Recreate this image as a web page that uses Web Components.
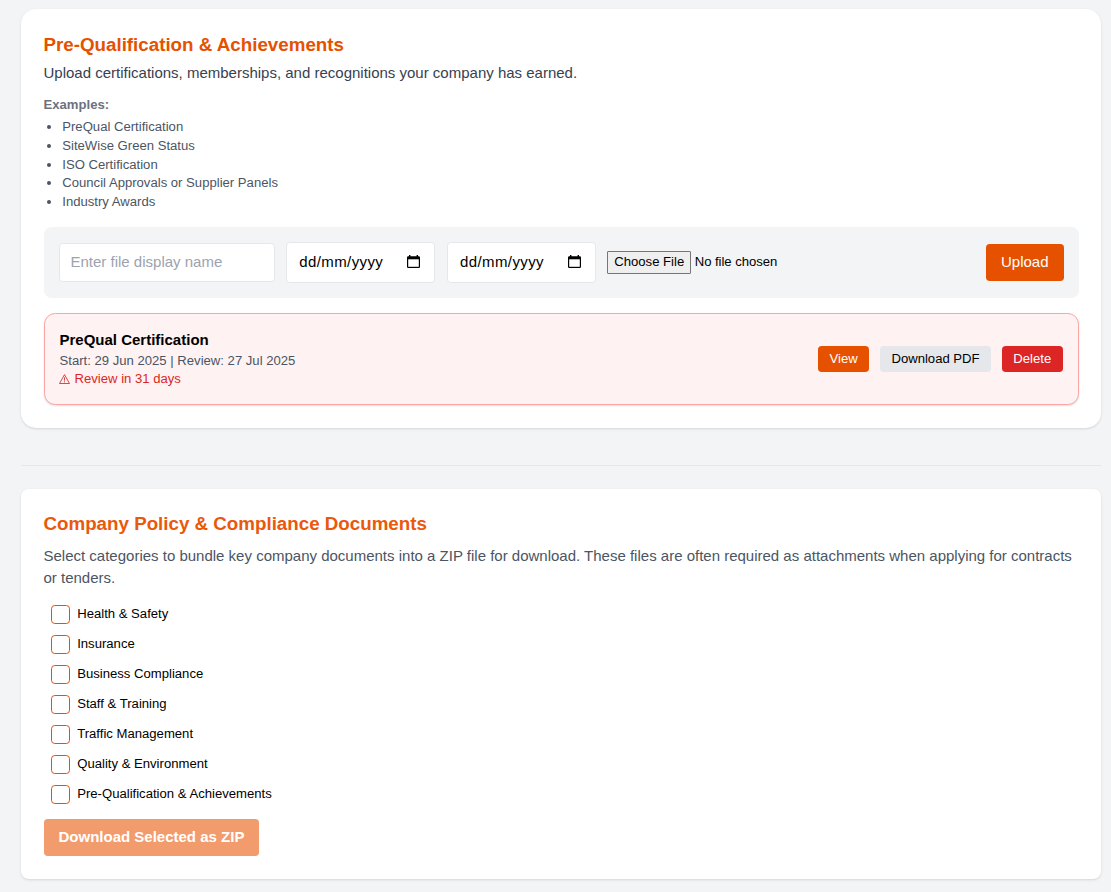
<!DOCTYPE html>
<html lang="en">
<head>
<meta charset="utf-8">
<title>Company documents</title>
<style>
html{font-size:15px}
body{margin:0;background:#f3f4f6;color:#000;font:1rem/1.5 "Liberation Sans",Arial,sans-serif;min-height:892px}
</style>
</head>
<body>
<documents-page></documents-page>
<script>
const define = (name, html) => customElements.define(name, class extends HTMLElement {
  constructor() {
    super();
    this.attachShadow({ mode: 'open' }).innerHTML = '<style>*{box-sizing:border-box}</style>' + html;
  }
});

define('panel-card', `<style>
:host{display:block;box-sizing:border-box;background:#fff;padding:1.5rem;border-radius:var(--radius,.5rem);box-shadow:0 1px 3px rgba(0,0,0,.1),0 1px 2px -1px rgba(0,0,0,.1)}
h2{margin:0;font-size:1.25rem;line-height:1.75rem;font-weight:700;color:var(--title,#ea580c)}
</style><h2><slot name="title"></slot></h2><slot></slot>`);

define('example-list', `<style>
:host{display:block;margin-top:11.5px;font-size:.875rem;line-height:1.25rem;color:#4b5563}
b{display:block;color:#6b7280}
ul{margin:.25rem 0 0;padding-left:1.25rem;list-style:disc}
</style><b>Examples:</b><ul><li>PreQual Certification</li><li>SiteWise Green Status</li><li>ISO Certification</li><li>Council Approvals or Supplier Panels</li><li>Industry Awards</li></ul>`);

define('date-field', `<style>
:host{display:flex;box-sizing:border-box;align-items:center;justify-content:space-between;width:149.5px;height:41px;padding:0 14px 0 12.5px;background:#fff;border:1px solid #e5e7eb;border-radius:.25rem}
span{letter-spacing:.4px;position:relative;top:-.5px}svg{display:block;position:relative;top:-.2px}
</style><span>dd/mm/yyyy</span><svg width="13" height="14" viewBox="0 0 13 14"><path d="M2 0h1.4v1.2h6.2V0H11v1.2h.7q1.3 0 1.3 1.3v9.2q0 1.3-1.3 1.3H1.3Q0 13 0 11.700V2.500Q0 1.200 1.300 1.200H2z"/><path fill="#fff" d="M1.200 4.300h10.600v7.500H1.200z"/></svg>`);

define('app-button', `<style>
:host{display:block;flex:none}
button{display:block;border:0;margin:0;font:inherit;font-size:var(--size,.875rem);line-height:var(--lh,1.25rem);font-weight:var(--weight,400);padding:var(--pad,.25rem .75rem);border-radius:.25rem;background:var(--bg,#e65100);color:var(--fg,#fff);white-space:nowrap}
</style><button type="button"><slot></slot></button>`);

define('file-picker', `<style>
:host{display:flex;align-items:center;gap:3.5px;font-size:.875rem;line-height:1.25rem}
button{font:inherit;color:#000;background:#efefef;border:1px solid #767676;border-radius:1px;padding:0 6px 1.5px;height:23px;width:84px;line-height:18px;white-space:nowrap}
span{letter-spacing:-.05px}
</style><button type="button">Choose File</button><span>No file chosen</span>`);

define('upload-form', `<style>
:host{display:flex;box-sizing:border-box;align-items:center;gap:.75rem;margin-top:1rem;padding:1rem;height:71.5px;background:#f3f4f6;border-radius:.5rem}
input{width:216px;height:39px;border:1px solid #e5e7eb;border-radius:.25rem;padding:0 11px 2px;font:inherit;background:#fff}
input::placeholder{color:#9ca3af}
app-button{margin-left:auto;--size:1rem;--lh:1.5rem;--pad:.5rem 1rem}
</style><input placeholder="Enter file display name"><date-field></date-field><date-field></date-field><file-picker></file-picker><app-button>Upload</app-button>`);

define('certificate-row', `<style>
:host{display:flex;box-sizing:border-box;align-items:center;margin-top:1rem;padding:1rem;border:1px solid #fca5a5;border-radius:.75rem;background:#fef2f2;box-shadow:0 1px 2px rgba(0,0,0,.12)}
.info{flex:1;font-size:.875rem;line-height:1.25rem;color:#4b5563}
.name{font-size:1rem;line-height:1.5rem;font-weight:700;color:#000}
.warn{color:#dc2626;display:flex;align-items:center;gap:4px;position:relative;top:-.5px}
svg{position:relative;left:-.5px;top:-.3px}
.actions{display:flex;gap:.75rem}
</style><div class="info"><div class="name">PreQual Certification</div><div>Start: 29 Jun 2025 | Review: 27 Jul 2025</div><div class="warn"><svg width="11" height="10" viewBox="0 0 11 10" fill="none" stroke="#dc2626" stroke-width=".85"><path d="M5.500.6 10.500 9.500H.5zM5.500 3.300v3.400M5.500 7.300v1.100"/></svg><span>Review in 31 days</span></div></div>
<div class="actions"><app-button style="--weight:500">View</app-button><app-button style="--bg:#e5e7eb;--fg:#000">Download PDF</app-button><app-button style="--bg:#dc2626">Delete</app-button></div>`);

define('category-option', `<style>
:host{display:block;height:30px;font-size:.875rem;line-height:1.25rem}
label{display:flex;align-items:flex-start;gap:7.2px;padding-left:7.5px}
input{appearance:none;margin:.5px 0 0;width:19px;height:19px;border:1px solid #e65100;border-radius:.25rem;background:#fff}
span{margin-top:.75px}
</style><label><input type="checkbox"><span><slot></slot></span></label>`);

define('documents-page', `<style>
:host{display:block;padding:9px 10px 12px 21px}
.lead{margin:.25rem 0 0;color:#374151}
.text{margin:.5rem 0 0;color:#4b5563}
hr{border:0;height:1px;background:#e5e7eb;margin:37px 0 22.600px}
.first{--radius:1rem;--title:#e65100;height:419px}
.second{height:390.5px}
.options{margin-top:14.250px}
.zip{margin-top:4.700px;--bg:#f29b6d;--size:1rem;--lh:1.5rem;--pad:.5rem 1rem;--weight:700}
</style>
<panel-card class="first"><span slot="title">Pre-Qualification &amp; Achievements</span>
<p class="lead">Upload certifications, memberships, and recognitions your company has earned.</p>
<example-list></example-list><upload-form></upload-form><certificate-row></certificate-row></panel-card>
<hr>
<panel-card class="second"><span slot="title">Company Policy &amp; Compliance Documents</span>
<p class="text">Select categories to bundle key company documents into a ZIP file for download. These files are often required as attachments when applying for contracts or tenders.</p>
<div class="options"><category-option>Health &amp; Safety</category-option><category-option>Insurance</category-option><category-option>Business Compliance</category-option><category-option>Staff &amp; Training</category-option><category-option>Traffic Management</category-option><category-option>Quality &amp; Environment</category-option><category-option>Pre-Qualification &amp; Achievements</category-option></div>
<app-button class="zip">Download Selected as ZIP</app-button></panel-card>`);
</script>
</body>
</html>
